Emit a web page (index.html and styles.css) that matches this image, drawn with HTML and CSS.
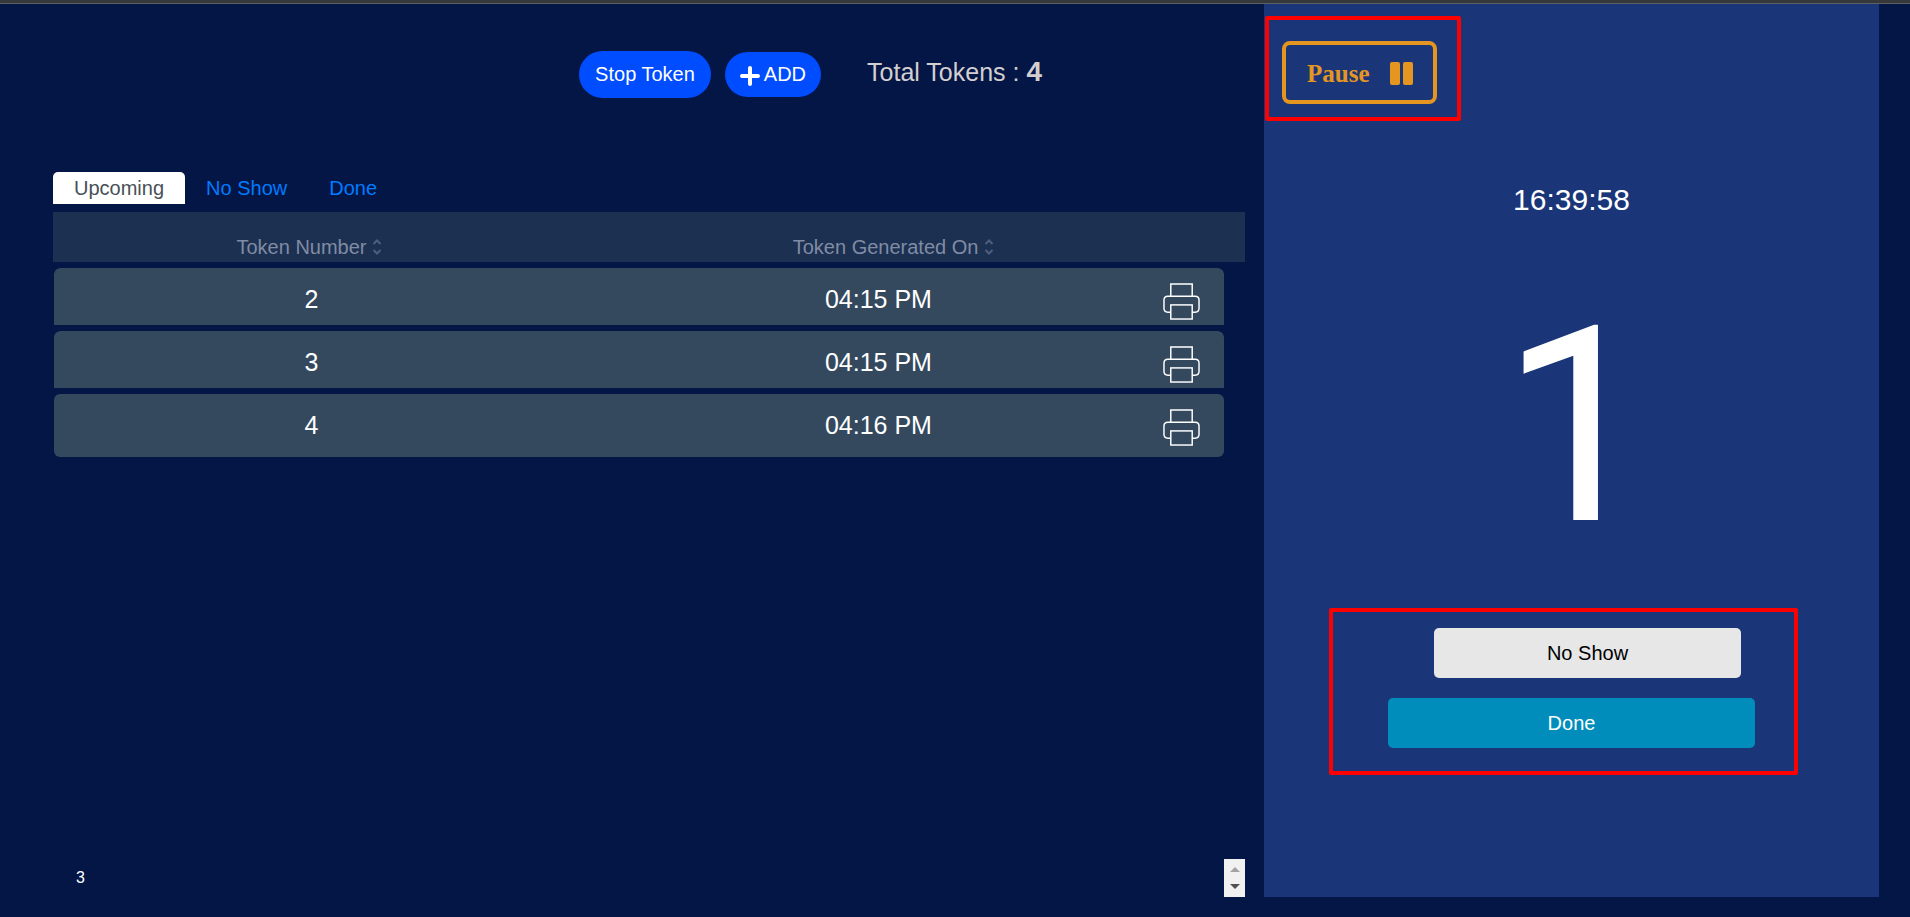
FILE: index.html
```html
<!DOCTYPE html>
<html lang="en">
<head>
  <meta charset="UTF-8" />
  <meta name="viewport" content="width=device-width, initial-scale=1.0"/>
  <title>Token Queue</title>
  <link rel="stylesheet" href="styles.css">
</head>
<body>
  <svg class="icon-defs" aria-hidden="true">
    <symbol id="icon-sort" viewBox="0 0 10 16">
      <path d="M1.5 5 L5 1.5 L8.5 5 M1.5 11 L5 14.5 L8.5 11" fill="none" stroke="currentColor" stroke-width="2"/>
    </symbol>
    <symbol id="icon-print" viewBox="0 0 38 38">
      <g fill="none" stroke="currentColor" stroke-width="1.5">
        <path d="M8 13.5 V1 H30 V13.5"/>
        <path d="M8 30 H5 Q1 30 1 26 V17.5 Q1 13.5 5 13.5 H33 Q37 13.5 37 17.5 V26 Q37 30 33 30 H30"/>
        <rect x="8" y="22.5" width="22" height="14.5"/>
      </g>
    </symbol>
  </svg>

  <div class="main-container">
    <div class="queue-container">
      <div class="toolbar">
        <button type="button" class="btn-round btn-stop">Stop Token</button>
        <button type="button" class="btn-round btn-add">
          <svg class="plus-icon" viewBox="0 0 20 20" aria-hidden="true"><path d="M10 2 V18 M2 10 H18" stroke="#fff" stroke-width="4" stroke-linecap="round"/></svg>ADD
        </button>
        <p class="total">Total Tokens : <strong>4</strong></p>
      </div>

      <nav class="tabs">
        <a href="#upcoming" class="tab active">Upcoming</a>
        <a href="#noshow" class="tab">No Show</a>
        <a href="#done" class="tab">Done</a>
      </nav>

      <table class="token-head">
        <thead>
          <tr>
            <th class="col-number">Token Number <svg class="sort-icon" aria-hidden="true"><use href="#icon-sort"/></svg></th>
            <th class="col-time">Token Generated On <svg class="sort-icon" aria-hidden="true"><use href="#icon-sort"/></svg></th>
            <th></th>
          </tr>
        </thead>
      </table>

      <table class="token-rows">
        <tbody>
          <tr>
            <td class="col-number">2</td>
            <td class="col-time">04:15 PM</td>
            <td class="col-print"><button type="button" class="btn-print" aria-label="Print token 2"><svg class="print-icon"><use href="#icon-print"/></svg></button></td>
          </tr>
          <tr>
            <td class="col-number">3</td>
            <td class="col-time">04:15 PM</td>
            <td class="col-print"><button type="button" class="btn-print" aria-label="Print token 3"><svg class="print-icon"><use href="#icon-print"/></svg></button></td>
          </tr>
          <tr>
            <td class="col-number">4</td>
            <td class="col-time">04:16 PM</td>
            <td class="col-print"><button type="button" class="btn-print" aria-label="Print token 4"><svg class="print-icon"><use href="#icon-print"/></svg></button></td>
          </tr>
        </tbody>
      </table>

      <div class="queue-footer">
        <span class="row-count">3</span>
        <div class="scroller">
          <span class="arrow-up"></span>
          <span class="arrow-down"></span>
        </div>
      </div>
    </div>

    <div class="current-container">
      <div class="pause-section">
        <button type="button" class="btn-pause">Pause
          <svg class="pause-icon" viewBox="0 0 23 23" aria-hidden="true"><rect width="10" height="23" rx="2"/><rect x="13" width="10" height="23" rx="2"/></svg>
        </button>
        <div class="highlight highlight-pause"></div>
      </div>
      <div class="clock">16:39:58</div>
      <div class="current-token">1</div>
      <div class="actions">
        <button type="button" class="btn-action btn-noshow">No Show</button>
        <button type="button" class="btn-action btn-done">Done</button>
        <div class="highlight highlight-actions"></div>
      </div>
    </div>
  </div>
</body>
</html>
```
FILE: styles.css
```css
* {
  box-sizing: border-box;
}
body {
  font-family: "Liberation Sans", Arial, sans-serif;
  font-size: 20px;
  line-height: 24px;
  background-color: #031645;
  color: #fff;
  margin: 0;
  border-top: 3px solid #37383a;
}
button {
  font-family: inherit;
  font-size: 20px;
  line-height: 24px;
  border: none;
  padding: 0;
  cursor: pointer;
}
.icon-defs {
  display: none;
}
.main-container {
  display: flex;
  min-height: calc(100vh - 3px);
  border-top: 1px solid #5b5f66;
  padding: 0 31px 20px 0;
}
.queue-container {
  flex: 1;
  display: flex;
  flex-direction: column;
  padding: 47px 19px 0 53px;
}

/* Toolbar */
.toolbar {
  display: flex;
  align-items: center;
  justify-content: flex-end;
  padding-right: 203px;
  margin-bottom: 74px;
}
.btn-round {
  background-color: #004cff;
  color: #fff;
  border-radius: 24px;
}
.btn-stop {
  height: 47px;
  padding: 0 16px 2px;
  margin-right: 14px;
}
.btn-add {
  display: flex;
  align-items: center;
  height: 45px;
  padding: 0 15px 2px;
}
.plus-icon {
  width: 20px;
  height: 20px;
  margin: 4px 4px 0 0;
}
.total {
  margin: 0 0 6px 46px;
  font-size: 25px;
  line-height: 32px;
  color: #d3cfd0;
}
.total strong {
  font-size: 28px;
}

/* Tabs */
.tabs {
  display: flex;
  margin-bottom: 8px;
}
.tab {
  padding: 4px 21px;
  border-radius: 5px 5px 0 0;
  color: #007bff;
  text-decoration: none;
}
.tab.active {
  background-color: #fff;
  color: #495057;
}

/* Token tables */
.token-head, .token-rows {
  border-spacing: 0;
  table-layout: fixed;
}
.token-head {
  width: 100%;
  margin-bottom: 6px;
}
.token-head th {
  height: 50px;
  padding: 20px 0 0;
  background-color: #1c3052;
  color: #808ca3;
  font-weight: normal;
}
.token-head .col-number {
  width: 43%;
}
.token-head .col-time {
  width: 55%;
}
.sort-icon {
  width: 10px;
  height: 16px;
  vertical-align: -1px;
  color: #4e5f7d;
}
.token-rows {
  width: calc(100% - 22px);
  margin-left: 1px;
}
.token-rows td {
  height: 63px;
  padding: 17px 0 0;
  background-color: #34495e;
  background-clip: padding-box;
  border-bottom: 6px solid transparent;
  font-size: 25px;
  line-height: 28px;
  text-align: center;
  vertical-align: top;
}
.token-rows td:first-child {
  border-top-left-radius: 6px;
}
.token-rows td:last-child {
  border-top-right-radius: 6px;
}
.token-rows tr:last-child td {
  border-bottom: none;
}
.token-rows tr:last-child td:first-child {
  border-bottom-left-radius: 6px;
}
.token-rows tr:last-child td:last-child {
  border-bottom-right-radius: 6px;
}
.token-rows .col-number {
  width: 44%;
}
.token-rows .col-time {
  padding-left: 50px;
}
.token-rows .col-print {
  width: 86px;
  padding-top: 15px;
}
.btn-print {
  background: none;
  color: #fff;
}
.print-icon {
  display: block;
  width: 37px;
  height: 37px;
}

/* Footer */
.queue-footer {
  display: flex;
  justify-content: space-between;
  align-items: center;
  margin-top: auto;
  padding-left: 23px;
}
.row-count {
  font-size: 16px;
}
.scroller {
  display: flex;
  flex-direction: column;
  align-items: center;
  justify-content: space-between;
  width: 21px;
  height: 38px;
  padding: 8px 0;
  background-color: #f1f1f1;
}
.arrow-up, .arrow-down {
  border-left: 5px solid transparent;
  border-right: 5px solid transparent;
}
.arrow-up {
  border-bottom: 5px solid #a3a3a3;
}
.arrow-down {
  border-top: 5px solid #505050;
}

/* Current token */
.current-container {
  width: 615px;
  max-width: 40%;
  background-color: #1a3679;
  text-align: center;
}
.pause-section {
  position: relative;
  display: flex;
  padding: 37px 18px 0;
}
.btn-pause {
  display: flex;
  align-items: center;
  justify-content: space-between;
  width: 155px;
  height: 63px;
  padding: 2px 20px 0 21px;
  background: none;
  border: 4px solid #e59621;
  border-radius: 8px;
  color: #e59621;
  font-family: "Liberation Serif", "Times New Roman", serif;
  font-size: 25px;
  font-weight: bold;
}
.pause-icon {
  width: 23px;
  height: 23px;
  fill: currentColor;
}
.clock {
  margin-top: 80px;
  font-size: 30px;
  line-height: 32px;
}
.current-token {
  margin-top: 76px;
  padding-left: 12px;
  font-family: Roboto, Arial, sans-serif;
  font-size: 273px;
  line-height: 270px;
}
.actions {
  position: relative;
  display: flex;
  flex-direction: column;
  gap: 20px;
  margin-top: 66px;
  padding: 0 124px;
}
.btn-action {
  height: 50px;
  border-radius: 5px;
}
.btn-noshow {
  margin: 0 14px 0 46px;
  background-color: #e7e7e7;
  color: #000;
}
.btn-done {
  background-color: #008dbc;
  color: #fff;
}

/* Red marker boxes */
.highlight {
  position: absolute;
  border: 4px solid #f00;
  border-radius: 2px;
  pointer-events: none;
}
.highlight-pause {
  top: 12px;
  left: 1px;
  width: 196px;
  height: 105px;
}
.highlight-actions {
  top: -20px;
  bottom: -27px;
  left: 65px;
  right: 81px;
}
```
